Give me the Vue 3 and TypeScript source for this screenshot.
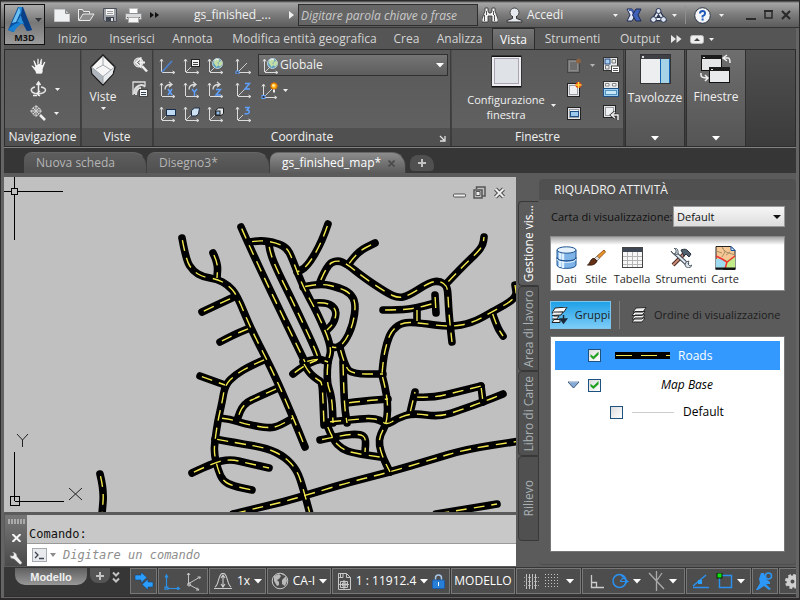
<script setup lang="ts">
import { h, ref } from 'vue'

type IconDef = [number, number, string]

const axes = '<path d="M2.500 15V3M1 4.500L2.500 2 4 4.500M3 15.500h12M13.500 14l2.500 1.500-2.500 1.500" fill="none" stroke="#dcdcdc"/>'
const diag = '<path d="M3 15L8 10" stroke="#cfcfcf" fill="none"/>'
const longDiag = '<path d="M3 15L12 6" stroke="#cfcfcf" fill="none"/>'
const turn = '<path d="M6 8.500C6 5 8 3.500 12 3.500M10 1l3 2.500-3 2.500" fill="none" stroke="#dcdcdc" stroke-width="1.300"/>'
const globe = (x: number, y: number, r: number) =>
  `<circle cx="${x}" cy="${y}" r="${r}" fill="#5c9fc0" stroke="#d5e4ea" stroke-width=".8"/><path d="M${x - r + 1} ${y - 1}l2-3 3-.5 1 2-2 2 1 2-2 2zM${x + 1} ${y - 1}l3-2 1 3-2 3-2-1z" fill="#c4dda5"/><path d="M${x - 3} ${y - 3}q2-2 4-1" stroke="#fff" fill="none"/>`
const glyph = (d: string) => `<path d="${d}" fill="none" stroke="#5ea0ff" stroke-width="1.500"/>`
const pane = (x: number, y: number, w: number, hh: number) =>
  `<rect x="${x}.5" y="${y}.5" width="${w}" height="${hh}" fill="#e2e4e7" stroke="#222"/><rect x="${x + 2}.5" y="${y + 2}.5" width="${w - 4}" height="${hh - 4}" fill="#eef0f2" stroke="#9a9da2"/>`

const icons: Record<string, IconDef> = {
  logo: [24, 27, '<path d="M10 1h4l10 23-5 1-4-7-6 0-4 8-5-2z" fill="#0b4f9c"/><path d="M11 1L4 17l4-1 5-11z" fill="#6cc0f2"/><path d="M0 24Q7 15 15 17Q9 20 6 26z" fill="#1780d6"/><path d="M13 1l2 0 9 23-5 1-6-14z" fill="#093f86"/><path d="M11 1h3l-1 8-4 7 7 2-2-4" fill="#2a93de"/>'],
  fresh: [16, 14, '<path d="M.5 1.500h11l4 4v8H.5z" fill="#eef0f1" stroke="#c5c7c9"/><path d="M11.500 1.500v4h4z" fill="#bfc2c5" stroke="#888"/>'],
  open: [17, 14, '<path d="M.5 12.500v-11h4l1 2h6v2" fill="#777" stroke="#ececec"/><path d="M1 12.500L5 6h11l-4 6.500z" fill="#8d8d8d" stroke="#ececec"/>'],
  save: [14, 14, '<path d="M.5 .5h13v13H2l-1.500-2z" fill="#9ea2a7" stroke="#4c5159"/><rect x="3" y="1" width="8" height="6" fill="#f4f4f4"/><path d="M4 3.500h6M4 5.500h6" stroke="#9a9a9a"/><rect x="3" y="9" width="8" height="4" fill="#3e444d"/><rect x="8" y="10" width="2" height="3" fill="#ddd"/>'],
  print: [17, 15, '<rect x="4.500" y=".5" width="8" height="6" fill="#fff" stroke="#bbb"/><rect x=".5" y="5.500" width="16" height="6" rx="1" fill="#d8d9da" stroke="#8f9092"/><path d="M2 9.500h13" stroke="#666"/><rect x="3.500" y="9.500" width="10" height="5" fill="#f5f5f5" stroke="#aaa"/>'],
  more: [9, 8, '<path d="M0 1l4 3-4 3zM5 1l4 3-4 3z" fill="#111"/>'],
  moreLight: [11, 8, '<path d="M0 0l5 4-5 4zM5.500 0l5 4-5 4z" fill="#e8e8e8"/>'],
  find: [16, 16, '<path d="M3 1h3v3l1 2h2l1-2V1h3v3l3 8v3H10V9H6v6H0v-3l3-8z" fill="#f4f4f4" stroke="#333" stroke-width=".8"/><path d="M2.500 8v6M12.500 8v6M4.500 4v4M11.500 4v4" stroke="#555"/>'],
  user: [17, 16, '<circle cx="8.500" cy="5.500" r="4.500" fill="#e6eaf0" stroke="#444"/><path d="M6.500 9v2.500L1 13.500V15h15v-1.500l-5.500-2V9" fill="#e6eaf0" stroke="#333"/>'],
  exchange: [16, 14, '<path d="M1 1h5l3.500 6L6 13H1l3-6z" fill="#dfe6f6" stroke="#1d2b55"/><path d="M3 2h3l2 4" fill="none" stroke="#3f5ca8" stroke-width="2"/><path d="M15 1h-5L6.500 7l3.500 6h5l-3-6z" fill="#3f62b8" stroke="#1d2b55"/>'],
  a360: [17, 15, '<path d="M8.500 4L4 11h9z" fill="none" stroke="#27324e" stroke-width="4.500"/><path d="M8.500 4L4 11h9z" fill="none" stroke="#e6ebf4" stroke-width="2"/><g fill="#dce4f2" stroke="#27324e"><circle cx="8.500" cy="3" r="2.500"/><circle cx="3.500" cy="11.500" r="2.800"/><circle cx="13.500" cy="11.500" r="2.800"/></g>'],
  help: [17, 17, '<circle cx="8.500" cy="8.500" r="7.800" fill="#f3f5f8" stroke="#2c3544"/><path d="M6 6.500Q6 4 8.600 4T11 6.500Q11 8 8.600 9.200V10.500" fill="none" stroke="#1d58b8" stroke-width="2"/><rect x="7.600" y="11.500" width="2" height="2" fill="#1d58b8"/>'],
  minimize: [11, 11, '<rect x="0" y="8" width="10" height="2" fill="#2a2a2a"/>'],
  maximize: [10, 10, '<path d="M1 1h7v7H1z" fill="none" stroke="#2a2a2a" stroke-width="1.500"/><path d="M0 1h9" stroke="#2a2a2a" stroke-width="2"/>'],
  close: [10, 10, '<path d="M1 1l8 8M9 1L1 9" stroke="#2a2a2a" stroke-width="2.200"/>'],
  down: [5, 3, '<path d="M0 0h5L2.500 3z" fill="#f0f0f0"/>'],
  downBig: [8, 5, '<path d="M0 0h8L4 4.500z" fill="#fff"/>'],
  downDark: [7, 4, '<path d="M0 0h7L3.500 4z" fill="#34363d"/>'],
  right: [5, 8, '<path d="M0 0l5 4-5 4z" fill="#f0f0f0"/>'],
  pill: [14, 9, '<rect x=".5" y=".5" width="13" height="8" rx="2" fill="#eee" stroke="#bbb"/><path d="M4 6h6L7 3z" fill="#444"/>'],
  hand: [17, 17, '<path d="M5 14L1.500 9.500Q.5 8 2 8l3 2L3 4Q3 2.500 4.500 3L7 8V2Q8 .5 9 2v5l1.500-5Q12 1 12.300 2.500L12 8l2-3.500q1.500-.5 1.500 1L13 12v3l-1 2H6z" fill="#f4f4f4" stroke="#444" stroke-width=".6"/>'],
  orbit: [17, 16, '<path d="M5 6C0 7 0 11 5 12.500h2M11 6c6 1 6 5 0 6.500H8" fill="none" stroke="#e2e2e2" stroke-width="1.500"/><path d="M8.500 2v13M6.500 4l2-3 2 3M3 14.500h4M10 10l-3 2.500 3 2.500" fill="none" stroke="#eee" stroke-width="1.500"/>'],
  zoomExt: [16, 16, '<circle cx="6" cy="6" r="4.500" fill="#777" stroke="#d8d8d8" stroke-dasharray="3 1"/><path d="M6 0v12M0 6h12M3 3l6 6M9 3L3 9" stroke="#d2d2d2"/><path d="M10 10l5 5" stroke="#f0f0f0" stroke-width="2.500"/>'],
  cube: [26, 32, '<path d="M13 1L25 13 23 20 13 31 2 20 1 13z" fill="#f6f6f6" stroke="#1e1e1e" stroke-width="1.500"/><path d="M1.500 13L13 23v7L2.500 19z" fill="#aeb5bc"/><path d="M13 23l11-10-1.500 7L13 30z" fill="#e8ebed"/><path d="M1.500 13L13 22.500 24.500 13M13 22v8M6 15l7-4 8 5M13 2v9" fill="none" stroke="#8e949b" stroke-width=".8"/>'],
  zoomPrev: [16, 16, '<circle cx="6.500" cy="5.500" r="4.500" fill="#b8b8b8" stroke="#eee"/><path d="M10 9l5 5.500" stroke="#eee" stroke-width="2.500"/><path d="M13 5.500H6M8.500 1.500L4 5.500l4.500 4z" stroke="#eee" stroke-width="2" fill="#eee"/><path d="M8 3.500L5.500 5.500 8 7.500" stroke="#555" fill="none"/>'],
  viewMgr: [16, 16, '<path d="M1 14V1h12v4" fill="none" stroke="#ddd" stroke-width="1.300"/><path d="M2 13c0-8 8-11 11-7M4 14c0-5 2-7 5-7" stroke="#ddd" stroke-width="2" fill="none"/><rect x="7.500" y="8.500" width="8" height="7" fill="#f2f2f2" stroke="#444"/><path d="M9 11.500h5M9 13.500h5" stroke="#345"/>'],
  ucs: [17, 17, axes + '<path d="M3 15L13 4" stroke="#4d80cc" stroke-width="1.800"/>'],
  ucsNamed: [17, 17, axes + diag + '<rect x="8.500" y="2.500" width="8" height="7" fill="#f2f2f2" stroke="#222"/><path d="M10 5.500h5M10 7.500h5" stroke="#444"/>'],
  ucsWorld: [17, 17, axes + diag + globe(10.5, 6.5, 5)],
  ucsOrigin: [17, 17, axes + longDiag + '<path d="M1 14h3v3H1z" fill="#4c4c4c" stroke="#5ea0ff"/>'],
  ucsX: [17, 17, axes + turn + glyph('M9 8l4 6M13 8l-4 6')],
  ucsY: [17, 17, axes + turn + glyph('M9 8l2.500 3L14 8M11.500 11v4')],
  ucsZ: [17, 17, axes + turn + glyph('M9 8.500h4.500L9 14h5')],
  ucsZAxis: [17, 17, axes + longDiag + glyph('M10 2.500h4.500L10 8h5')],
  ucsView: [17, 17, axes + diag + '<rect x="7.500" y="4.500" width="9" height="6" fill="#bdd8f1" stroke="#1a2f4b"/>'],
  ucsObject: [17, 17, axes + diag + '<path d="M8.500 5.500l3-2.500h5l-1 6-2.500 2h-4.500z" fill="#cfe2f4" stroke="#1c2c44"/>'],
  ucsFace: [17, 17, axes + diag + '<path d="M8.500 5.500l3-2.500h5v5.500l-2.500 2h-5.500z" fill="#e4e9ee" stroke="#222"/><rect x="9" y="6" width="4" height="4" fill="#8dbbe8" stroke="#222"/>'],
  ucs3: [17, 17, axes + diag + glyph('M10 2.500h4L12 5q3 0 2 3-2 1.500-4.500 .5')],
  ucsIcon: [17, 17, axes + longDiag + '<rect x="1" y="13.500" width="3" height="3" fill="#333" stroke="#5ea0ff"/><circle cx="13" cy="4" r="3.200" fill="#ffb017" stroke="#d66c00"/><circle cx="12.500" cy="3.500" r="1.300" fill="#fff4bb"/><path d="M13 7.500v3" stroke="#eee" stroke-width="2"/>'],
  config: [31, 33, '<path d="M.5 .5h30v32H.5z" fill="#111"/><rect x="1" y="2" width="29" height="29" fill="#eeeef2"/><rect x="3.500" y="3.500" width="24" height="25" fill="#dfe2e6" stroke="#aaa5b0"/>'],
  vpNamedOff: [15, 15, '<rect x=".5" y="1.500" width="12" height="13" fill="#777" stroke="#454545"/><rect x="2.500" y="3.500" width="8" height="9" fill="#6d6d6d" stroke="#8b8b8b"/><circle cx="11.500" cy="3" r="2.500" fill="#8b6242"/>'],
  vpNew: [15, 15, pane(0, 1, 12, 13) + '<circle cx="11.500" cy="3" r="3" fill="#e33d12"/><path d="M11.500 0v6M8.500 3h6" stroke="#ffd53a" stroke-width="1.500"/>'],
  vpClip: [15, 15, pane(0, 1, 13, 12) + '<rect x="3.500" y="5.500" width="8" height="5" fill="#9cc8ec" stroke="#1e4f86"/>'],
  vpNamed: [17, 16, '<rect x=".5" y=".5" width="14" height="13" fill="#e8eaec" stroke="#333"/><rect x="2" y="2" width="5" height="5" fill="#a8cdf0" stroke="#20477c"/><path d="M9 2.500h3.500V6H9zM2.500 8.500H6V12H2.500z" fill="none" stroke="#777"/><rect x="8.500" y="9" width="8" height="6.500" fill="#fff" stroke="#444"/><path d="M10 11.500h5M10 13.500h5" stroke="#555"/>'],
  vpJoin: [16, 16, '<rect x=".5" y=".5" width="15" height="15" fill="#e6e8ea" stroke="#333"/><path d="M2.500 2.500H6V5H2.500zM9.500 2.500H13V5H9.500z" fill="#fff" stroke="#888"/><rect x=".5" y="7.500" width="15" height="8" fill="#9ed1ef" stroke="#1e4f86"/><rect x="2.500" y="9.500" width="11" height="4" fill="#c8e7f8" stroke="#5293bf"/>'],
  vpRestore: [16, 16, pane(0, 0, 12, 12) + '<path d="M15 15V10H9M12 7l-3.500 3 3.500 3" fill="none" stroke="#333" stroke-width="3"/><path d="M15 15V10H9M12 7l-3.500 3 3.500 3" fill="none" stroke="#eee" stroke-width="1.500"/>'],
  palettes: [31, 30, '<rect x=".5" y=".5" width="30" height="29" fill="#eceef0" stroke="#333"/><rect x="1" y="1" width="29" height="4" fill="#3e4045"/><rect x="2" y="2" width="2" height="2" fill="#ddd"/><rect x="20" y="5" width="10" height="24" fill="#a6d3e6"/><path d="M20.500 5v24M29.500 5v24" stroke="#1565b5"/>'],
  windows: [32, 29, '<rect x="1.500" y="1.500" width="20" height="15" fill="#e4e6e8" stroke="#111"/><path d="M1 3h21" stroke="#1c1c1c" stroke-width="4"/><rect x="9.500" y="13.500" width="20" height="15" fill="#e8eaec" stroke="#111"/><path d="M9 15h21" stroke="#1c1c1c" stroke-width="4"/><path d="M27 1l-4 3 4 3M23.500 4H28q2 0 2 5M1 19v2q0 3 6 3M5 21l3 3-3 3" fill="none" stroke="#eee" stroke-width="1.500"/><path d="M3 3.500h2M11 15.500h2" stroke="#ddd"/>'],
  corner: [7, 7, '<path d="M1 1l4 4M6 1v5H1" fill="none" stroke="#e2e2e2" stroke-width="1.300"/>'],
  winMin: [13, 10, '<rect x=".5" y="6" width="12" height="3" rx="1" fill="#eee" stroke="#555"/>'],
  winRestore: [13, 13, '<path d="M3.500 3V1H12v9h-2.500M1 4h8v8H1z" fill="none" stroke="#555" stroke-width="1.500"/><path d="M3 5.500h4v4H3z" fill="#eee" stroke="#555"/>'],
  winClose: [13, 12, '<path d="M2.500 2l8 8M10.500 2l-8 8" stroke="#4b4b4b" stroke-width="4"/><path d="M2.500 2l8 8M10.500 2l-8 8" stroke="#eee" stroke-width="2"/>'],
  cmdClose: [9, 8, '<path d="M.5 0l8 8M8.500 0l-8 8" stroke="#f4f4f4" stroke-width="2"/>'],
  wrench: [14, 14, '<path d="M3 1l2 2-1 2-3-.5Q1 8 5 8l6 5.500q2 0 2-2L8 5.500Q8 1 3 1z" fill="#f1f1f1" stroke="#666" stroke-width=".5"/>'],
  prompt: [15, 14, '<rect x=".5" y=".5" width="14" height="13" fill="#e8eaee" stroke="#a7abb2"/><path d="M3 4l3 3-3 3M7 10.500h5" fill="none" stroke="#3e4350" stroke-width="1.300"/>'],
  downGrey: [6, 4, '<path d="M0 0h6L3 4z" fill="#8c8c8c"/>'],
  db: [21, 23, '<path d="M1 4v15c0 4.500 19 4.500 19 0V4" fill="#7fb4e8" stroke="#1e5390"/><path d="M4 5v16M7 6v16" stroke="#dff0ff" stroke-width="2.500"/><ellipse cx="10.500" cy="4" rx="9.500" ry="3.200" fill="#e5f1fd" stroke="#1e5390"/><path d="M1 11.500c0 4.500 19 4.500 19 0" fill="none" stroke="#1e5390" stroke-width="1.500"/><path d="M1 13c0 4.500 19 4.500 19 0" fill="none" stroke="#e9f6ff"/>'],
  brush: [19, 17, '<path d="M17 1L8 9l2 2.500L18.500 3z" fill="#e8942e" stroke="#9b5510"/><path d="M10 7L7.500 9.500 10 12l2.500-2.500z" fill="#ddd" stroke="#777" stroke-width=".7"/><path d="M7.500 9.500C3 9 4 14 .5 16c5 .5 8-.5 9.500-4z" fill="#633015" stroke="#3a1c0c"/>'],
  table: [21, 21, '<rect x=".5" y=".5" width="20" height="20" fill="#f7f7f7" stroke="#444"/><rect x="1" y="1" width="19" height="4" fill="#3f4653"/><path d="M5.500 5v15M10.500 5v15M15.500 5v15M1 9.500h19M1 13.500h19M1 17.500h19" stroke="#b4b4b4"/>'],
  tools: [22, 20, '<path d="M3 17L14 6" stroke="#4a2a22" stroke-width="4"/><path d="M3 17L14 6" stroke="#c98a78" stroke-width="2"/><path d="M11 2q5-2 7 1l3 3-2 3-3-3-2 2z" fill="#50606d" stroke="#27313b"/><path d="M5 5l13 12" stroke="#394653" stroke-width="4"/><path d="M5 5l13 12" stroke="#e4ebf0" stroke-width="2"/><path d="M1 3l3 3 2-1V2L4 0q5 0 4 6-5 2-7-3M15 17q0-4 4-4l-1 3 2 2 2-1q-1 3-4 3-3-1-3-3" fill="#dbe3e9" stroke="#394653" stroke-width=".8"/>'],
  maps: [21, 24, '<path d="M1 .5h15l4 4V23.500H1z" fill="#f6c693" stroke="#222"/><path d="M1 13h8l2 6-3 4.500H1z" fill="#9ddcf0"/><path d="M11 14l9-3v12h-9l1-5z" fill="#c2ec8a"/><path d="M1 10l6 3 5 3 8-6M12 16l-2 7" fill="none" stroke="#e33" stroke-width="1.500"/><path d="M7 1l3 5-3 5M15 6l-4 3M7 2l4 4 9 3M1 5l6 2" stroke="#a78f69" fill="none"/><path d="M16 .5v4h4z" fill="#def" stroke="#15a"/><path d="M.5 22.500h20" stroke="#111" stroke-width="2"/>'],
  groups: [17, 17, '<path d="M4 1l12-1-3 5-12 1z" fill="#fff" stroke="#222"/><path d="M3 5l9 0-2 3-9 .5M3 9l5 0-2 3-5 0M3 12.500h6v3H1z" fill="#f2f2f2" stroke="#222"/><path d="M12.500 8v6M9.500 12l3 4 3-4z" fill="#1c2a38" stroke="#1c2a38" stroke-width="1.500"/>'],
  layers: [16, 16, '<g fill="#f0f0f0" stroke="#2b2b2b"><path d="M1 15l3-4h10l-3 4zM1 12l3-4h10l-3 4zM1 8.500l3-4h10l-3 4zM2 5l3-4 10-.5-3 4.500z"/></g>'],
  expand: [13, 8, '<path d="M1 1h11L6.500 7z" fill="#83a9d8" stroke="#3d5878"/><path d="M2 1h9" stroke="#d9e8fa"/>'],
  swap: [20, 18, '<g fill="#2b9dff"><path d="M1 3h6V0l6 5.500L7 11V8H1zM19 10h-5V7l-6 5.500 6 5.500v-3h5z" stroke="#173f68" stroke-width=".6"/></g>'],
  axesBlue: [17, 17, '<path d="M2.500 15V3M1 4.500L2.500 2 4 4.500M2.500 15.500h12M13 14l2.500 1.500-2.500 1.500M1 14h3v3H1z" fill="none" stroke="#2b90e8" stroke-width="1.200"/>'],
  axes3: [16, 19, '<path d="M2.500 12V1M1 3l1.500-2L4 3M2 12L14 5M11.500 5L14.500 5l-1 2M2 12l11 6M11 15.500l2 2.500-3 0" fill="none" stroke="#c4c4c4"/><circle cx="3" cy="12.500" r="1.500" fill="none" stroke="#ccc"/>'],
  scale: [20, 18, '<path d="M1 16.500h18M2 15C6 13 5 3 9 1.500h2C15 3 14 13 18 15M10 4v10M8 6l2-3 2 3M8 12l2 3 2-3" fill="none" stroke="#ccc" stroke-width="1.100"/>'],
  geo: [18, 18, '<circle cx="9" cy="9" r="7.800" fill="#4a4a4a" stroke="#c8c8c8"/><path d="M3 4l5-2 2 2-2 3-2 1 2 2v3l-2 1-3-5zM11 8l4-4 1 5-2 5-3-2zM10 2l3 0 1 2z" fill="#b9b9b9"/>'],
  annot: [15, 19, '<path d="M1.500 1.500h8l4 4v12h-12zM9.500 1.500v4h4M1 5.500h5v-4M3.500 1v4M3.500 9.500v6h7v-6zM7 8v9M2 12.500h10M5.500 11v3h3.500v-3z" fill="none" stroke="#c8c8c8"/>'],
  lock: [13, 15, '<path d="M3.500 6V4Q3.500 1 6.500 1T9.500 4v2" fill="none" stroke="#a9c8e8" stroke-width="1.500"/><rect x=".5" y="6" width="12" height="8.500" rx="1" fill="#287fd8" stroke="#1a5caa"/><path d="M6.500 8v4" stroke="#fff"/>'],
  snap: [15, 15, '<path d="M2.500 0v15M5.500 0v15M8.500 0v15M11.500 0v15" stroke="#c4c4c4"/><path d="M0 3.500h15M0 7.500h15M0 11.500h15" stroke="#a8a8a8" stroke-dasharray="1 1"/>'],
  dots: [14, 14, '<path d="M0 .5h14M0 3.500h14M0 6.500h14M0 9.500h14M0 12.500h14" stroke="#c4c4c4" stroke-dasharray="1 2"/>'],
  ortho: [15, 15, '<path d="M1.500 1v12.500H14M2 8.500h4.500V13" fill="none" stroke="#ccc" stroke-width="1.300"/>'],
  polar: [17, 16, '<circle cx="7.500" cy="8" r="6.500" fill="none" stroke="#2a91f0" stroke-width="1.500"/><path d="M8 8.500h7.500L9 2M13 6.500l3 2-3 2M8 8.500l4-5" fill="none" stroke="#2a91f0" stroke-width="1.200"/>'],
  iso: [17, 20, '<path d="M1 2l15 16M8.500 0v20M8.500 10L14 2" stroke="#aaa" fill="none" stroke-width="1.300"/>'],
  track: [18, 15, '<path d="M1 13.500h16M1 12L14 1" stroke="#2a91f0" stroke-width="1.500"/><path d="M6 6h4v4H6z" fill="#2aa0ff"/>'],
  osnap: [17, 16, '<path d="M3.500 2.500h12v12h-12z" fill="none" stroke="#2a91f0" stroke-width="1.400"/><rect x="1" y="0" width="5" height="5" fill="#12e212" stroke="#032403"/>'],
  person: [18, 18, '<path d="M5 1h3l2 6 4 3v2l-4 0 5 5-2 1-5-4-6 4H0l4-7-1-4z" fill="#2d97f7"/><circle cx="12.500" cy="4" r="3" fill="none" stroke="#2d97f7" stroke-width="1.500"/>'],
  gear: [15, 15, '<circle cx="7.500" cy="7.500" r="4" fill="none" stroke="#d0d0d0" stroke-width="4"/><circle cx="7.500" cy="7.500" r="6" fill="none" stroke="#d0d0d0" stroke-width="3" stroke-dasharray="2.700 2"/>'],
  plus: [8, 8, '<path d="M4 0v8M0 4h8" stroke="#c2c2c2" stroke-width="2"/>'],
  chevrons: [8, 12, '<path d="M1 1.500l3 3 3-3M1 7.500l3 3 3-3" fill="none" stroke="#c2c2c2" stroke-width="2"/>'],
  tabClose: [7, 7, '<path d="M.5 .5l6 6M6.500 .5l-6 6" stroke="#4c4c4c" stroke-width="1.800"/>'],
}

const Icon = (props: { name: string }) => {
  const [w, ht, body] = icons[props.name]
  return h('svg', { width: w, height: ht, viewBox: `0 0 ${w} ${ht}`, 'aria-hidden': 'true', innerHTML: body })
}
Icon.props = ['name']

const menus = [
  { label: 'Inizio', w: 59 },
  { label: 'Inserisci', w: 60 },
  { label: 'Annota', w: 61 },
  { label: 'Modifica entità geografica', w: 163 },
  { label: 'Crea', w: 41 },
  { label: 'Analizza', w: 65 },
  { label: 'Vista', w: 43 },
  { label: 'Strumenti', w: 75 },
  { label: 'Output', w: 60 },
]
const activeMenu = ref('Vista')

const coordIcons = [
  'ucs', 'ucsNamed', 'ucsWorld', 'ucsOrigin',
  'ucsX', 'ucsY', 'ucsZ', 'ucsZAxis',
  'ucsView', 'ucsObject', 'ucsFace', 'ucs3',
]

const sideTabs = ['Gestione vis...', 'Area di lavoro', 'Libro di Carte', 'Rilievo']
const activeSide = ref('Gestione vis...')

const mapTools = [
  { label: 'Dati', icon: 'db', w: 29 },
  { label: 'Stile', icon: 'brush', w: 30 },
  { label: 'Tabella', icon: 'table', w: 42 },
  { label: 'Strumenti', icon: 'tools', w: 56 },
  { label: 'Carte', icon: 'maps', w: 32 },
]

const roadsOn = ref(true)
const baseOn = ref(true)
const defaultOn = ref(false)

// Road centre lines in drawing units
const roads: string[] = [
  '182,238 186,260 193,271 203,277 217,279 228,285 237,295 250,327 268,362 278,383 292,415 305,447',
  '213,253 218,263 217,278',
  '202,312 236,296',
  '220,342 233,335 250,328',
  '266,359 250,366 235,375 225,385 222,403 218,420 215,440 214,453 218,470 223,481 233,486 252,490',
  '200,376 225,385',
  '278,388 260,396 243,404 237,420',
  '220,418 230,419 245,424 267,428 277,427 293,418',
  '215,439 237,443 267,448 285,457 297,470 303,488 310,514',
  '192,473 213,463 230,459 247,463 269,468',
  '233,514 257,508 283,502 310,494 350,482 390,472 430,460 467,449 520,441',
  '100,474 104,490 102,514',
  '436,514 473,508 497,504',
  '241,227 248,243 270,290 305,362',
  '250,242 260,240 277,243 287,248 292,258 303,287 317,312 332,347 328,362',
  '269,245 270,253 278,272 293,302 317,353 318,360',
  '305,362 317,358 328,362',
  '328,224 322,242 307,267 297,272',
  '320,282 327,265 337,260 347,264 363,277 387,293 398,298 408,296 430,282 440,281 447,286 448,295 449,315 452,342',
  '348,265 357,252 375,243',
  '447,283 462,267 477,253 483,245 484,237',
  '303,287 320,283 340,288 350,293 356,303 353,325 345,342 337,348 332,347',
  '315,303 327,302 337,310 334,323 327,330',
  '383,310 400,310 417,308 435,303',
  '435,295 436,313',
  '417,308 417,322',
  '382,375 383,360 387,342 392,330 403,322 420,323 450,327 472,323 492,312 517,298 515,285',
  '492,312 497,327 503,336',
  '382,375 388,397 387,423 380,435 379,445 383,458 390,472',
  '340,348 345,367 353,374 383,374',
  '343,362 344,403 347,423',
  '347,403 363,401 388,399',
  '328,422 350,420 370,418 380,420 387,425 398,418 413,413 440,417 463,409 483,402 503,394',
  '410,413 415,392',
  '415,397 432,398 457,392 481,386',
  '481,386 483,402',
  '320,440 343,435 360,434 366,438 365,452',
  '327,425 333,440 342,449 353,453 380,457',
  '293,374 303,366 317,360',
  '303,362 308,372 318,380 322,382 323,400 324,425',
  '328,362 326,380 332,397 333,423',
]

// Round the corners of each polyline by curving through segment midpoints
const toPath = (src: string): string => {
  const p = src.split(' ').map((s) => s.split(',').map(Number))
  let d = `M${p[0][0]} ${p[0][1]}`
  for (let i = 1; i < p.length - 1; i++) {
    d += `Q${p[i][0]} ${p[i][1]} ${(p[i][0] + p[i + 1][0]) / 2} ${(p[i][1] + p[i + 1][1]) / 2}`
  }
  const end = p[p.length - 1]
  return `${d}L${end[0]} ${end[1]}`
}
const roadPaths = roads.map(toPath)
</script>

<template>
  <div class="app">
    <header class="top">
      <button class="logo" aria-label="M3D"><span class="logo-pic"><Icon name="logo" /><Icon name="downDark" /></span><b>M3D</b></button>
      <div class="title">
        <div class="quick">
          <button aria-label="Nuovo"><Icon name="fresh" /></button>
          <button aria-label="Apri"><Icon name="open" /></button>
          <button aria-label="Salva"><Icon name="save" /></button>
          <button aria-label="Stampa"><Icon name="print" /></button>
          <button aria-label="Altro"><Icon name="more" /></button>
        </div>
        <span class="doc-name">gs_finished_...</span>
        <Icon name="right" />
        <input class="search" type="text" placeholder="Digitare parola chiave o frase" aria-label="Cerca" />
        <div class="info">
          <button aria-label="Cerca"><Icon name="find" /></button>
          <button class="login"><Icon name="user" /><span>Accedi</span><Icon name="down" /></button>
          <button aria-label="Exchange"><Icon name="exchange" /></button>
          <button class="duo" aria-label="A360"><Icon name="a360" /><Icon name="down" /></button>
          <i class="sep"></i>
          <button class="duo wide" aria-label="Guida"><Icon name="help" /><Icon name="down" /></button>
        </div>
        <div class="win">
          <button aria-label="Riduci"><Icon name="minimize" /></button>
          <button aria-label="Ingrandisci"><Icon name="maximize" /></button>
          <button aria-label="Chiudi"><Icon name="close" /></button>
        </div>
      </div>
      <nav class="menus">
        <button v-for="m in menus" :key="m.label" :class="{ on: activeMenu === m.label }" :style="{ width: m.w + 'px' }" @click="activeMenu = m.label">{{ m.label }}</button>
        <button class="extra" aria-label="Altre schede"><Icon name="moreLight" /></button>
        <button class="extra" aria-label="Riduci barra"><Icon name="pill" /><Icon name="down" /></button>
      </nav>
    </header>

    <section class="ribbon">
      <div class="group nav">
        <div class="body rows">
          <button aria-label="Pan"><Icon name="hand" /></button>
          <button aria-label="Orbita"><Icon name="orbit" /><Icon name="down" /></button>
          <button aria-label="Zoom"><Icon name="zoomExt" /><Icon name="down" /></button>
        </div>
        <h3>Navigazione</h3>
      </div>
      <div class="group views">
        <div class="body">
          <button class="big"><Icon name="cube" /><span>Viste</span><Icon name="down" /></button>
          <div class="rows">
            <button aria-label="Zoom precedente"><Icon name="zoomPrev" /></button>
            <button aria-label="Gestione viste"><Icon name="viewMgr" /></button>
          </div>
        </div>
        <h3>Viste</h3>
      </div>
      <div class="group coords">
        <div class="body">
          <div class="grid">
            <button v-for="c in coordIcons" :key="c" :aria-label="c"><Icon :name="c" /></button>
          </div>
          <div class="coord-side">
            <label class="combo"><Icon name="ucsWorld" />
              <select aria-label="Sistema di coordinate"><option>Globale</option></select>
              <Icon name="downBig" />
            </label>
            <button class="duo" aria-label="Icona UCS"><Icon name="ucsIcon" /><Icon name="down" /></button>
          </div>
        </div>
        <h3>Coordinate<Icon name="corner" /></h3>
      </div>
      <div class="group ports">
        <div class="body">
          <button class="big"><Icon name="config" /><span>Configurazione<br />finestra</span></button>
          <Icon class="cfg-arrow" name="down" />
          <div class="rows">
            <button aria-label="Finestra con nome"><Icon name="vpNamedOff" /><Icon class="dim" name="down" /></button>
            <button aria-label="Nuova finestra"><Icon name="vpNew" /></button>
            <button aria-label="Ritaglia"><Icon name="vpClip" /></button>
          </div>
          <div class="rows">
            <button aria-label="Con nome"><Icon name="vpNamed" /></button>
            <button aria-label="Unisci"><Icon name="vpJoin" /></button>
            <button aria-label="Ripristina"><Icon name="vpRestore" /></button>
          </div>
        </div>
        <h3>Finestre</h3>
      </div>
      <button class="tall"><Icon name="palettes" /><span>Tavolozze</span><Icon class="end" name="downBig" /></button>
      <button class="tall"><Icon name="windows" /><span>Finestre</span><Icon class="end" name="downBig" /></button>
    </section>

    <nav class="docs">
      <button class="doc">Nuova scheda</button>
      <button class="doc">Disegno3*</button>
      <button class="doc on">gs_finished_map*<Icon name="tabClose" /></button>
      <button class="doc-add" aria-label="Nuova scheda"><Icon name="plus" /></button>
    </nav>

    <main class="work">
      <section class="left">
        <div class="canvas">
          <svg class="drawing" viewBox="4 177 512 335" preserveAspectRatio="xMinYMin slice" role="img" aria-label="Mappa stradale">
            <g fill="none" stroke="#000" stroke-width="7.6" stroke-linecap="round" stroke-linejoin="round">
              <path v-for="(d, i) in roadPaths" :key="i" :d="d" />
            </g>
            <g fill="none" stroke="#f3e94e" stroke-width="1.4" stroke-dasharray="11 7" stroke-dashoffset="-2">
              <path v-for="(d, i) in roadPaths" :key="i" :d="d" />
            </g>
            <g fill="none" stroke="#000" shape-rendering="crispEdges">
              <path d="M4 191.500h7M18 191.500h45M14.500 177v11M14.500 195v45M11.500 188.500h6v6h-6z" />
              <path d="M14.500 452v49M15 501.500h49M10.500 496.500h9v9h-9z" />
            </g>
            <path d="M17 434l5.500 6 5.500-6M22.500 440v7M69 488l13 12M82 488l-13 12" fill="none" stroke="#222" stroke-width="1" />
          </svg>
          <div class="canvas-win">
            <button aria-label="Riduci disegno"><Icon name="winMin" /></button>
            <button aria-label="Ripristina disegno"><Icon name="winRestore" /></button>
            <button aria-label="Chiudi disegno"><Icon name="winClose" /></button>
          </div>
        </div>
        <div class="command">
          <div class="cmd-tools">
            <i class="grip"></i>
            <button aria-label="Chiudi"><Icon name="cmdClose" /></button>
            <button aria-label="Personalizza"><Icon name="wrench" /></button>
          </div>
          <div class="cmd-text">
            <p>Comando:</p>
            <div class="cmd-line">
              <button aria-label="Comandi recenti"><Icon name="prompt" /><Icon name="downGrey" /></button>
              <input type="text" placeholder="Digitare un comando" aria-label="Comando" />
            </div>
          </div>
        </div>
      </section>

      <aside class="side">
        <div class="side-tabs">
          <button v-for="t in sideTabs" :key="t" :class="{ on: activeSide === t }" @click="activeSide = t"><span>{{ t }}</span></button>
        </div>
        <div class="pane">
          <h2>RIQUADRO ATTIVITÀ</h2>
          <div class="pane-body">
            <div class="map-pick">
              <label for="map">Carta di visualizzazione:</label>
              <span class="pick"><select id="map"><option>Default</option></select></span>
            </div>
            <div class="tools">
              <button v-for="t in mapTools" :key="t.label" :style="{ width: t.w + 'px' }"><span class="pic"><Icon :name="t.icon" /></span>{{ t.label }}</button>
            </div>
            <div class="modes">
              <button class="on"><Icon name="groups" />Gruppi</button>
              <button><Icon name="layers" />Ordine di visualizzazione</button>
            </div>
            <ul class="tree">
              <li class="picked">
                <input v-model="roadsOn" type="checkbox" id="l-roads" />
                <svg class="swatch" width="55" height="7" viewBox="0 0 55 7" aria-hidden="true"><path d="M0 3.500h55" stroke="#000" stroke-width="7" /><path d="M1 3.500h54" stroke="#f3e94e" stroke-width="1" stroke-dasharray="16 9" /></svg>
                <label for="l-roads">Roads</label>
              </li>
              <li class="base">
                <button aria-label="Comprimi"><Icon name="expand" /></button>
                <input v-model="baseOn" type="checkbox" id="l-base" />
                <label for="l-base"><em>Map Base</em></label>
              </li>
              <li class="child">
                <input v-model="defaultOn" type="checkbox" id="l-default" />
                <i class="line"></i>
                <label for="l-default">Default</label>
              </li>
            </ul>
          </div>
        </div>
      </aside>
    </main>

    <footer class="status">
      <div class="layouts">
        <button class="model">Modello</button>
        <button class="add" aria-label="Nuovo layout"><Icon name="plus" /></button>
        <button class="chev" aria-label="Altri layout"><Icon name="chevrons" /></button>
      </div>
      <div class="cell c-swap"><button aria-label="Sincronizza"><Icon name="swap" /></button></div>
      <div class="cell c-axes"><button aria-label="UCS"><Icon name="axesBlue" /></button><button aria-label="UCS dinamico"><Icon name="axes3" /></button></div>
      <div class="cell c-scale"><button><Icon name="scale" />1x<Icon name="downBig" /></button></div>
      <div class="cell c-geo"><button><Icon name="geo" />CA-I<Icon name="downBig" /></button></div>
      <div class="cell c-ratio"><button><Icon name="annot" />1 : 11912.4<Icon name="downBig" /></button><button aria-label="Blocca"><Icon name="lock" /></button></div>
      <div class="cell c-model"><button>MODELLO</button></div>
      <div class="cell c-grid"><button aria-label="Snap"><Icon name="snap" /></button><button aria-label="Griglia"><Icon name="dots" /></button><Icon name="downBig" /></div>
      <div class="cell c-draft"><button aria-label="Orto"><Icon name="ortho" /></button><button aria-label="Polare"><Icon name="polar" /><Icon name="downBig" /></button><button aria-label="Isometrico"><Icon name="iso" /><Icon name="downBig" /></button></div>
      <div class="cell c-osnap"><button aria-label="Puntamento"><Icon name="track" /></button><button aria-label="Osnap"><Icon name="osnap" /><Icon name="downBig" /></button></div>
      <div class="cell c-person"><button aria-label="Annotazioni"><Icon name="person" /></button></div>
      <div class="cell c-gear"><button aria-label="Impostazioni"><Icon name="gear" /></button></div>
    </footer>
  </div>
</template>

<style>
body {
  background: #2b2b2b;
}
</style>

<style scoped>
* {
  box-sizing: border-box;
}

.app {
  display: flex;
  flex-direction: column;
  min-height: 100vh;
  min-width: 800px;
  padding: 0 3px 1px 3px;
  border: 1px solid #2c2a2b;
  border-bottom-width: 2px;
  background: #646464;
  font: 12px/16px "Open Sans", "Noto Sans", sans-serif;
  color: #f0f0f0;
  overflow: hidden;
}

button,
input,
select {
  font: inherit;
  color: inherit;
}

button {
  display: flex;
  align-items: center;
  justify-content: center;
  padding: 0;
  border: 0;
  background: none;
  white-space: nowrap;
}

svg {
  flex: none;
  display: block;
}

h2,
h3,
p,
ul {
  margin: 0;
  padding: 0;
  font-weight: 400;
}

/* Title bar and menu tabs */
.top {
  position: relative;
}

.logo {
  position: absolute;
  z-index: 2;
  left: 0;
  top: 3px;
  width: 41px;
  height: 41px;
  flex-direction: column;
  border: 1px solid #111;
  background: linear-gradient(#ababab, #777 45%, #9b9b9b);
}

.logo-pic {
  display: flex;
  align-items: center;
  gap: 3px;
}

.logo b {
  font-size: 9px;
  line-height: 10px;
  color: #111;
}

.title {
  display: flex;
  align-items: center;
  height: 27px;
  margin: 0 -3px;
  padding: 2px 8px 0 53px;
  border-bottom: 1px solid #333;
  background: linear-gradient(#3a3a3a 0, #a5a5a5 2px, #7d7d7d 50%, #5b5b5b);
}

.quick {
  display: flex;
  gap: 8px;
  width: 140px;
}

.doc-name {
  width: 95px;
}

.search {
  width: 180px;
  height: 22px;
  margin-left: 4px;
  padding: 0 2px;
  border: 1px solid #2e2e2e;
  background: #656565;
  font-style: italic;
}

.search::placeholder {
  color: #c9c9c9;
  opacity: 1;
}

.info {
  display: flex;
  align-items: center;
  gap: 8px;
  padding-left: 4px;
}

.login {
  width: 112px;
  gap: 4px;
}

.login span {
  flex: 1;
  text-align: left;
}

.duo {
  gap: 5px;
}

.duo.wide {
  gap: 8px;
}

.sep {
  width: 1px;
  height: 18px;
  background: #8e8e8e;
}

.win {
  display: flex;
  gap: 7px;
  margin-left: auto;
}

.menus {
  display: flex;
  height: 21px;
  padding-left: 39px;
  background: #555;
  color: #d4d4d4;
}

.menus button {
  padding-top: 1px;
}

.menus .on {
  border: 1px solid #2c2c2c;
  border-bottom: 0;
  background: linear-gradient(#757575, #5e5e5e);
  color: #fff;
}

.menus .extra {
  gap: 5px;
  margin-left: 6px;
}

.menus .extra:nth-last-child(2) {
  margin-left: 1px;
  margin-right: 2px;
}

/* Ribbon */
.ribbon {
  display: flex;
  height: 98px;
  border: 1px solid #2d2d2d;
  background: linear-gradient(#505050, #3b3b3b);
}

.group {
  display: flex;
  flex: none;
  flex-direction: column;
  margin-right: 1px;
  background: linear-gradient(#595959, #626262);
  border-right: 1px solid #3c3c3c;
}

.group h3 {
  display: flex;
  align-items: center;
  justify-content: center;
  height: 18px;
  font-size: 12px;
  background: #505050;
}

.group .body {
  display: flex;
  flex: 1;
  padding-top: 4px;
}

.rows {
  display: grid;
  flex: none;
  grid-auto-rows: 24px;
  align-content: start;
  justify-items: start;
  margin-top: -1px;
}

.rows button {
  gap: 8px;
}

.nav {
  width: 76px;
}

.nav .body {
  display: grid;
  margin: 0;
  padding: 3px 0 0 25px;
}

.views {
  width: 71px;
}

.big {
  flex: none;
  flex-direction: column;
  justify-content: flex-start;
  gap: 4px;
  line-height: 15px;
}

.views .big {
  width: 42px;
  gap: 3px;
}

.views .rows {
  padding-left: 8px;
}

.coords {
  width: 297px;
}

.coords .body {
  gap: 3px;
  padding-left: 5px;
}

.grid {
  display: grid;
  grid-template-columns: 24px 24px 28px 20px;
  grid-auto-rows: 24px;
  margin-top: -1px;
}

.grid button {
  justify-content: flex-start;
}

.coord-side {
  display: grid;
  grid-template-rows: 24px 24px;
  justify-items: start;
  align-content: start;
  flex: 1;
  padding-right: 2px;
}

.combo {
  display: flex;
  align-items: center;
  width: 100%;
  height: 22px;
  padding: 0 3px;
  border: 1px solid #303030;
  background: linear-gradient(#757575, #5d5d5d);
}

.combo select {
  flex: 1;
  appearance: none;
  border: 0;
  padding: 0 1px;
  background: none;
}

.coord-side .duo {
  padding-left: 3px;
}

.coords h3 {
  position: relative;
}

.coords h3 svg {
  position: absolute;
  right: 4px;
  bottom: 4px;
}

.ports {
  width: 172px;
}

.ports .big {
  width: 108px;
  padding-top: 1px;
  font-size: 11px;
}

.ports .rows {
  width: 36px;
}

.ports .rows + .rows {
  width: 18px;
}

.cfg-arrow {
  margin: 50px 11px 0 -9px;
}

.dim {
  opacity: 0.6;
}

.tall {
  flex: none;
  flex-direction: column;
  justify-content: flex-start;
  gap: 6px;
  width: 60px;
  margin: 0 1px 0 0;
  padding: 4px 0 5px;
  border: 1px solid #303030;
  border-width: 0 1px;
  background: linear-gradient(#6e6e6e, #555);
}

.tall .end {
  margin-top: auto;
}

/* Document tabs */
.docs {
  display: flex;
  height: 30px;
  padding: 4px 0 0 20px;
  border-top: 1px solid #818181;
  border-bottom: 4px solid #5b5b5b;
  background: #363636;
}

.doc {
  width: 123px;
  justify-content: flex-start;
  gap: 7px;
  padding-left: 12px;
  border-radius: 8px 14px 0 0;
  border-top: 1px solid #666;
  border-right: 1px solid #3f3f3f;
  background: linear-gradient(#5d5d5d, #505050);
  color: #b5b5b5;
}

.doc.on {
  width: 136px;
  background: linear-gradient(#8c8c8c, #5b5b5b);
  color: #fff;
}

.doc-add {
  width: 24px;
  height: 16px;
  margin: 3px 4px;
  border-radius: 8px 10px 4px 4px;
  background: #505050;
}

/* Work area */
.work {
  display: flex;
  flex: 1;
}

.left {
  display: flex;
  flex-direction: column;
  flex: 1;
  min-width: 0;
}

.canvas {
  position: relative;
  flex: 1;
  background: #c0c0c0;
  overflow: hidden;
}

.drawing {
  position: absolute;
  inset: 0;
  width: 100%;
  height: 100%;
}

.canvas-win {
  position: absolute;
  top: 9px;
  right: 10px;
  display: flex;
  gap: 7px;
}

.command {
  display: flex;
  height: 55px;
  padding: 3px 0 1px 1px;
  background: #5b5b5b;
}

.cmd-tools {
  display: flex;
  flex-direction: column;
  align-items: center;
  justify-content: space-between;
  width: 22px;
  padding: 4px 0 1px;
  background: linear-gradient(#777, #4a4a4a);
}

.grip {
  width: 17px;
  height: 5px;
  background: repeating-linear-gradient(90deg, #aaa 0 2px, transparent 2px 3px);
}

.cmd-text {
  flex: 1;
  background: #c8c8c8;
  color: #111;
  font: 12px/16px "DejaVu Sans Mono", monospace;
}

.cmd-text p {
  height: 28px;
  padding: 11px 2px 0;
}

.cmd-line {
  display: flex;
  height: 23px;
  padding-left: 5px;
  background: #fff;
  border-top: 1px solid #9a9a9a;
}

.cmd-line button {
  gap: 3px;
}

.cmd-line input {
  flex: 1;
  padding: 0 7px;
  border: 0;
  background: none;
  font-style: italic;
}

.cmd-line input::placeholder {
  color: #8d8d8d;
  opacity: 1;
}

/* Task pane */
.side {
  display: flex;
  width: 280px;
  padding: 1px 0 2px 1px;
  background: #5b5b5b;
}

.side-tabs {
  width: 22px;
  padding: 23px 0 0 1px;
}

.side-tabs button {
  width: 21px;
  height: 85px;
  border: 1px solid #383838;
  border-radius: 4px 0 0 4px;
  background: #505050;
  color: #a8b0b5;
}

.side-tabs .on {
  border-right-color: #5b5b5b;
  background: #5b5b5b;
  color: #fff;
}

.side-tabs span {
  writing-mode: vertical-rl;
  transform: rotate(180deg);
}

.pane {
  flex: 1;
  border-bottom: 1px solid #4e4e4e;
  border-radius: 0 0 4px 4px;
}

.pane h2 {
  height: 21px;
  margin-top: 1px;
  padding-left: 15px;
  border-radius: 4px 4px 0 0;
  background: #505050;
  font-size: 12px;
  line-height: 21px;
}

.pane-body {
  padding: 6px 11px 0 11px;
}

.map-pick {
  display: flex;
  align-items: center;
  height: 21px;
  color: #111;
  font-size: 11px;
}

.map-pick label {
  width: 123px;
  padding-left: 1px;
  white-space: nowrap;
}

.pick {
  position: relative;
  flex: 1;
  height: 21px;
}

.pick::after {
  content: "";
  position: absolute;
  top: 9px;
  right: 4px;
  border: 4px solid transparent;
  border-top-color: #111;
  pointer-events: none;
}

.pick select {
  width: 100%;
  height: 100%;
  padding: 0 3px;
  border: 1px solid #fff;
  outline: 1px solid #999;
  outline-offset: -1px;
  appearance: none;
  background: linear-gradient(#f6f6f6, #ddd);
}

.tools {
  display: flex;
  height: 55px;
  margin: 9px 0 10px;
  padding: 0 1px;
  border: 1px solid #8b8b8b;
  background: linear-gradient(#a5a5a5, #fff 8px);
  color: #2b2b2b;
  font-size: 11px;
}

.tools button {
  flex-direction: column;
  justify-content: flex-end;
  padding-bottom: 3px;
}

.pic {
  display: flex;
  align-items: center;
  height: 27px;
}

.modes {
  display: flex;
  height: 28px;
  margin-bottom: 7px;
  color: #1d1d1d;
  font-size: 11px;
}

.modes button {
  gap: 7px;
  padding-left: 11px;
}

.modes .on {
  width: 61px;
  margin-right: 8px;
  padding: 0 2px;
  border: 1px solid #7fc4ec;
  background: linear-gradient(#20a1e8, #7cccf6);
}

.modes button + button {
  border-left: 1px solid #7d7d7d;
}

.tree {
  height: 216px;
  padding: 4px;
  border: 1px solid #777;
  background: #fff;
  color: #000;
  list-style: none;
}

.tree li {
  display: flex;
  align-items: center;
  height: 28px;
}

.tree .picked {
  gap: 14px;
  height: 29px;
  padding-left: 33px;
  background: #3399ff;
  color: #fff;
}

.picked label {
  margin-left: -6px;
}

.tree .base {
  gap: 8px;
  height: 30px;
  padding-left: 12px;
}

.base label {
  margin-left: 52px;
}

.tree .child {
  height: 24px;
  padding-left: 55px;
  gap: 9px;
}

.line {
  width: 42px;
  height: 1px;
  background: #ccc;
}

.tree input {
  display: grid;
  width: 13px;
  height: 13px;
  margin: 0;
  appearance: none;
  border: 1px solid #1c5180;
  background: linear-gradient(135deg, #dcdcdc, #fff);
  place-items: center;
}

.tree input:checked::before {
  content: "";
  width: 9px;
  height: 9px;
  background: #21a121;
  clip-path: polygon(5% 35%, 38% 60%, 95% 5%, 95% 42%, 38% 95%, 5% 65%);
}

/* Status bar */
.status {
  display: flex;
  align-items: flex-start;
  gap: 1px;
  height: 30px;
  padding-top: 1px;
  border-bottom: 1px solid #2e2e2e;
  background: #363636;
  overflow: hidden;
}

.layouts {
  display: flex;
  flex: none;
  width: 125px;
  align-items: flex-start;
}

.model {
  width: 72px;
  height: 17px;
  margin: 0 3px 0 11px;
  border-radius: 0 0 10px 10px;
  background: linear-gradient(#606060, #989898);
  font: bold 11px/16px "Liberation Sans", sans-serif;
}

.add {
  width: 20px;
  height: 15px;
  border-radius: 0 0 8px 8px;
  background: #555;
}

.chev {
  margin: 3px 2px;
}

.cell {
  display: flex;
  flex: none;
  align-items: center;
  justify-content: space-evenly;
  height: 26px;
  border: 1px solid #777;
  background: #4d4d4d;
  color: #fff;
}

.cell button {
  gap: 4px;
}

.c-swap { width: 27px; }
.c-axes { width: 50px; }
.c-scale { width: 57px; }
.c-geo { width: 64px; }
.c-ratio { width: 118px; }
.c-model { width: 64px; }
.c-grid { width: 65px; }
.c-draft { width: 103px; }
.c-osnap { width: 65px; }
.c-person { width: 26px; }
.c-gear { width: 26px; }
</style>
